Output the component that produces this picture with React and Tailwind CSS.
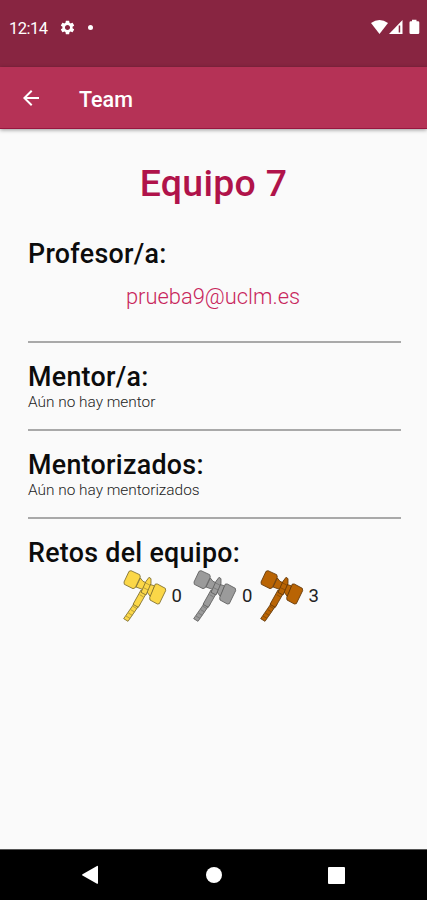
import { MdArrowBack, MdSettings } from "react-icons/md";

const challenges = [
  { id: "gold", fill: "#fbd748", stroke: "#7a6a2c", width: "w-[70.5px]", count: 0 },
  { id: "silver", fill: "#9b9b9b", stroke: "#5c5c5c", width: "w-[66.5px]", count: 0 },
  { id: "bronze", fill: "#b96404", stroke: "#5f3507", width: "w-[66.5px]", count: 3 },
];

function Gavel({ fill, stroke }) {
  return (
    <svg viewBox="0 0 132 162" className="w-11 h-[54px] shrink-0" fill={fill} stroke={stroke} strokeWidth="2.5" strokeLinejoin="round">
      <path d="M38 97 L51 105 L15 157 L2 149 Z" />
      <path d="M30 112 l12 7 M23 122 l12 7 M16 132 l12 7 M9 141 l12 7" strokeWidth="1.5" />
      <path d="M54 63 L70 73 L46 115 L30 106 Z" />
      <path d="M52 27 L60 37 L73 43 L95 51 L83 84 L72 69 L58 61 L39 54 Z" />
      <path d="M24 5 L50 17 L52 24 L37 56 L30 59 L4 46 L3 39 L18 7 Z" />
      <path d="M97 45 L103 45 L127 58 L128 65 L109 104 L103 105 L81 93 L80 86 Z" />
      <path d="M78 25 L84 29 L84 43 L69 78 L54 70 L69 37 Z" />
      <path d="M68 42 l14 7 M61 56 l15 7 M50 77 l12 7" strokeWidth="1.5" />
    </svg>
  );
}

function Section({ title, children }) {
  return (
    <section>
      <h2 className="text-[26.8px] leading-8 tracking-[0.3px] font-medium text-[#0c0c0c]">{title}</h2>
      {children}
    </section>
  );
}

function Divider() {
  return <hr className="my-[18px] border-0 h-0.5 bg-[#a9a9a9]" />;
}

export default function App() {
  return (
    <div className="w-full h-[900px] flex flex-col bg-[#fafafa] font-['Roboto',sans-serif] overflow-hidden">
      <div className="h-[67px] shrink-0 bg-[#882541] flex items-start justify-between pt-[18px] pl-[9px] pr-[7px] text-white">
        <div className="flex items-center h-[19px]">
          <span className="text-[16.5px] tracking-[-0.5px] leading-[19px] w-[39px] pt-px whitespace-nowrap">12:14</span>
          <MdSettings className="size-[17px] ml-[11px]" />
          <span className="size-[5px] rounded-full bg-white ml-3" />
        </div>
        <svg viewBox="0 0 50 18" className="w-[50px] h-[18px]" fill="white">
          <path d="M1 5 Q9.5 -1 18 5 L9.5 16 Z" />
          <path d="M19 16 L32.5 2 V16 Z" />
          <path d="M28.7 7.5 h1.5 v7 h-1.5 Z" fill="#882541" />
          <path d="M42 1.8 h4.5 v1.4 h1.5 q1.3 0 1.3 1.3 v10.2 q0 1.3 -1.3 1.3 h-7.2 q-1.3 0 -1.3 -1.3 V4.5 q0 -1.3 1.3 -1.3 h1.2 Z" />
        </svg>
      </div>

      <header className="h-[62px] shrink-0 bg-[#b53256] border-b border-[#98163f] shadow-[0_1px_4px_rgba(0,0,0,0.4)] flex items-center pl-[19px] text-white">
        <MdArrowBack className="size-6" />
        <h1 className="ml-9 pt-1 text-[21.5px] leading-7 font-medium">Team</h1>
      </header>

      <main className="flex-1 pt-8 pl-7 pr-[26px]">
        <div className="mr-[2px] text-center text-[37.4px] leading-[44px] tracking-[0.3px] font-medium text-[#b0134a]">Equipo 7</div>

        <div className="mt-[33px]">
          <Section title="Profesor/a:">
            <p className="mt-[13px] mb-[30px] mr-[3px] text-center text-[21.9px] leading-7 font-light text-[#c8265c]">prueba9@uclm.es</p>
          </Section>
        </div>
        <hr className="mb-[18px] border-0 h-0.5 bg-[#a9a9a9]" />

        <Section title="Mentor/a:">
          <p className="text-[15.4px] leading-[18px] font-light text-[#222]">Aún no hay mentor</p>
        </Section>
        <Divider />

        <Section title="Mentorizados:">
          <p className="text-[15.4px] leading-[18px] font-light text-[#222]">Aún no hay mentorizados</p>
        </Section>
        <Divider />

        <Section title="Retos del equipo:">
          <div className="flex items-center pl-[94.5px]">
            {challenges.map((c) => (
              <div key={c.id} className={`flex items-center ${c.width}`}>
                <Gavel fill={c.fill} stroke={c.stroke} />
                <span className="ml-[5px] text-[18.5px] leading-6 text-[#222]">{c.count}</span>
              </div>
            ))}
          </div>
        </Section>
      </main>

      <nav className="h-[51px] shrink-0 bg-black border-t border-[#555] flex items-center justify-between pl-[81px] pr-[82px]">
        <svg viewBox="0 0 18 20" className="w-[18px] h-5" fill="white">
          <path d="M1.5 9.2 L16 1 q1 -.5 1 .7 V18 q0 1.2 -1 .7 L1.5 10.6 q-1 -.7 0 -1.4Z" />
        </svg>
        <span className="size-4 rounded-full bg-white" />
        <span className="size-[17px] rounded-[1px] bg-white" />
      </nav>
    </div>
  );
}
